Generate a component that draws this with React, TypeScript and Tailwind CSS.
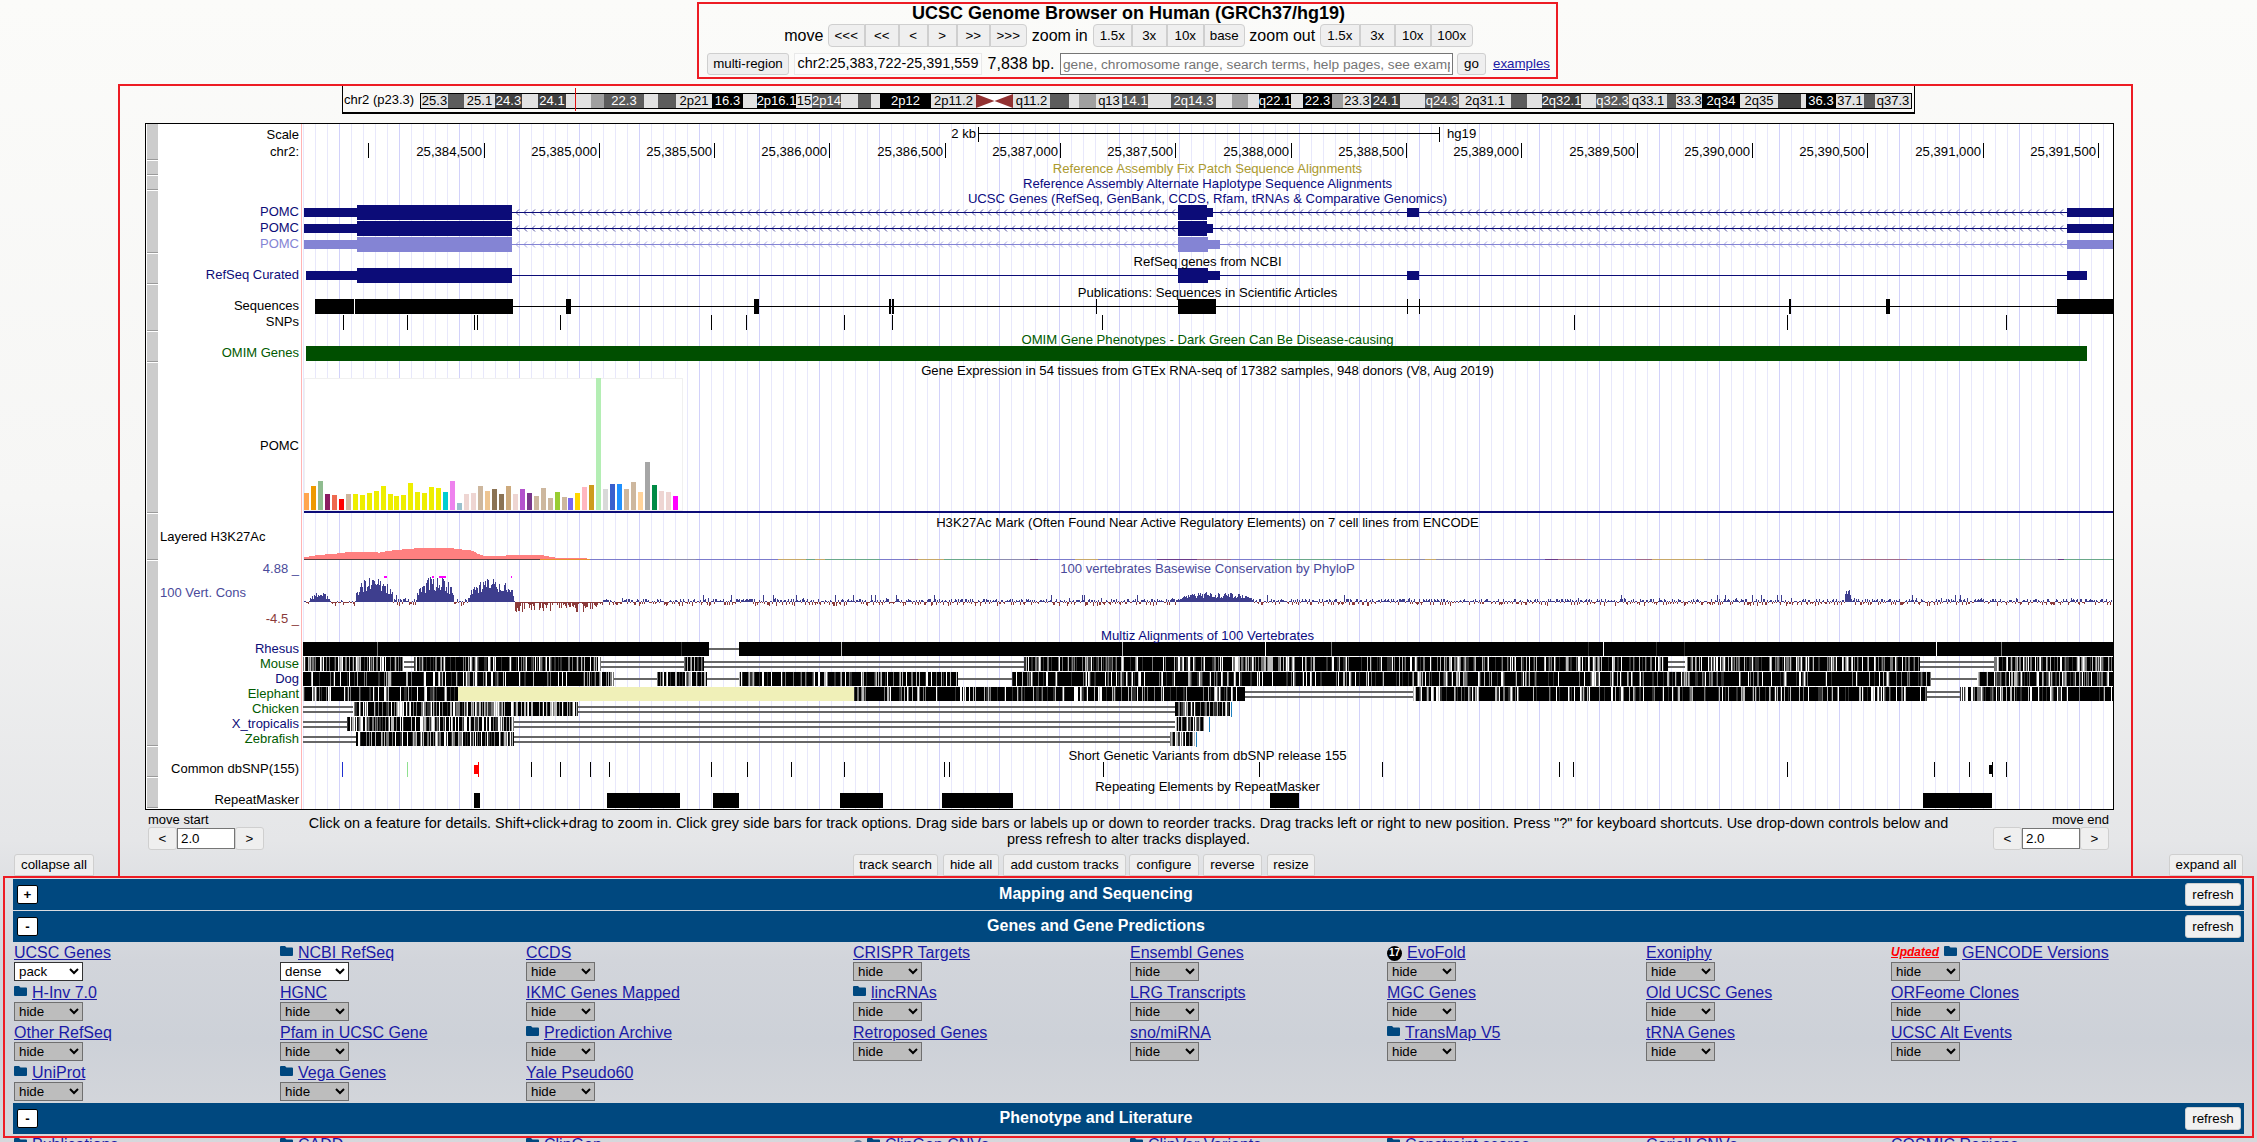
import React from 'react';

// --- seeded noise so the wiggle tracks come out the same on every load ---
function makeRand(seed: number) {
  let s = seed;
  return () => {
    s = (s * 1664525 + 1013904223) >>> 0;
    return s / 4294967296;
  };
}

const navy = '#0c0c78';
const green = '#005a00';
const blueBar = '#00487f';

// ideogram bands: [start px, end px, tone, label]
type Tone = 'l' | 'm' | 'd' | 'g' | 'k';
const toneClass: Record<Tone, string> = {
  l: 'bg-[#e2e2e2] text-black',
  m: 'bg-[#a0a0a0] text-black',
  g: 'bg-[#5c5c5c] text-white',
  d: 'bg-[#404040] text-white',
  k: 'bg-black text-white',
};
const bandsLeft: [number, number, Tone, string][] = [
  [421, 448, 'l', '25.3'], [448, 464, 'g', ''], [464, 495, 'l', '25.1'], [495, 522, 'd', '24.3'],
  [522, 538, 'l', ''], [538, 566, 'd', '24.1'], [566, 591, 'l', ''], [591, 604, 'm', ''],
  [604, 644, 'g', '22.3'], [644, 658, 'l', ''], [658, 676, 'g', ''], [676, 712, 'l', '2p21'],
  [712, 743, 'k', '16.3'], [743, 757, 'l', ''], [757, 796, 'k', '2p16.1'], [796, 812, 'l', '15'],
  [812, 841, 'g', '2p14'], [841, 858, 'l', ''], [858, 871, 'g', ''], [871, 880, 'l', ''],
  [880, 931, 'k', '2p12'], [931, 976, 'l', '2p11.2'],
];
const bandsRight: [number, number, Tone, string][] = [
  [1013, 1050, 'l', 'q11.2'], [1050, 1069, 'g', ''], [1069, 1079, 'l', ''], [1079, 1096, 'm', ''],
  [1096, 1122, 'l', 'q13'], [1122, 1148, 'g', '14.1'], [1148, 1171, 'l', ''], [1171, 1216, 'g', '2q14.3'],
  [1216, 1232, 'l', ''], [1232, 1248, 'm', ''], [1248, 1259, 'l', ''], [1259, 1291, 'k', 'q22.1'],
  [1291, 1303, 'l', ''], [1303, 1332, 'k', '22.3'], [1332, 1343, 'm', ''], [1343, 1371, 'l', '23.3'],
  [1371, 1400, 'd', '24.1'], [1400, 1425, 'l', ''], [1425, 1459, 'g', 'q24.3'], [1459, 1511, 'l', '2q31.1'],
  [1511, 1527, 'g', ''], [1527, 1542, 'l', ''], [1542, 1581, 'd', '2q32.1'], [1581, 1596, 'l', ''],
  [1596, 1629, 'g', 'q32.3'], [1629, 1667, 'l', 'q33.1'], [1667, 1676, 'g', ''], [1676, 1702, 'l', '33.3'],
  [1702, 1740, 'k', '2q34'], [1740, 1778, 'l', '2q35'], [1778, 1801, 'd', ''], [1801, 1806, 'l', ''],
  [1806, 1836, 'k', '36.3'], [1836, 1864, 'l', '37.1'], [1864, 1875, 'g', ''], [1875, 1911, 'l', 'q37.3'],
];

function Bands({ items }: { items: [number, number, Tone, string][] }) {
  return (
    <>
      {items.map(([a, b, tone, label]) => (
        <div
          key={a}
          style={{ width: b - a }}
          className={`${toneClass[tone]} flex items-center justify-center overflow-visible whitespace-nowrap text-[13px] leading-[14px]`}
        >
          {label}
        </div>
      ))}
    </>
  );
}

const btn = 'h-full border border-[#cfcfcf] bg-[#efefef] text-[13.33px] text-black flex items-center justify-center shrink-0';

function Header() {
  return (
    <header className="h-[85px] pt-[2px] flex flex-col items-center">
      <h1 className="h-[22px] text-[18px] leading-[22px] font-bold text-black">UCSC Genome Browser on Human (GRCh37/hg19)</h1>
      <div className="flex h-[23px] items-center text-[16px]">
        <span className="w-[43.5px]">move</span>
        <button className={`${btn} w-[37px] rounded-l-[4px]`}>&lt;&lt;&lt;</button>
        <button className={`${btn} w-[34px]`}>&lt;&lt;</button>
        <button className={`${btn} w-[29px]`}>&lt;</button>
        <button className={`${btn} w-[29px]`}>&gt;</button>
        <button className={`${btn} w-[33px]`}>&gt;&gt;</button>
        <button className={`${btn} w-[37px] rounded-r-[4px]`}>&gt;&gt;&gt;</button>
        <span className="w-[66px] text-center">zoom in</span>
        <button className={`${btn} w-[39px] rounded-l-[4px]`}>1.5x</button>
        <button className={`${btn} w-[35px]`}>3x</button>
        <button className={`${btn} w-[37px]`}>10x</button>
        <button className={`${btn} w-[41px] rounded-r-[4px]`}>base</button>
        <span className="w-[75px] text-center">zoom out</span>
        <button className={`${btn} w-[40px] rounded-l-[4px]`}>1.5x</button>
        <button className={`${btn} w-[35px]`}>3x</button>
        <button className={`${btn} w-[36px]`}>10x</button>
        <button className={`${btn} w-[42px] rounded-r-[4px]`}>100x</button>
      </div>
      <div className="mt-[6px] flex h-[22px] items-center">
        <button className={`${btn} w-[82px] rounded-[3px]`}>multi-region</button>
        <span className="ml-[5px] flex h-full w-[188px] items-center justify-center border border-[#e9e9e9] bg-[#fcfcfc] text-[14.4px]">chr2:25,383,722-25,391,559</span>
        <span className="w-[78px] text-center text-[16px]">7,838 bp.</span>
        <input
          readOnly
          placeholder="gene, chromosome range, search terms, help pages, see examples"
          className="h-full w-[393px] border border-[#767676] bg-white px-[2px] text-[13.7px] placeholder:text-[#757575]"
        />
        <button className={`${btn} ml-[4px] w-[29px] rounded-[3px]`}>go</button>
        <a className="ml-[7px] text-[13.33px] text-[#1a1aa6] underline">examples</a>
      </div>
    </header>
  );
}

function Ideogram() {
  return (
    <div className="mx-auto flex h-[29px] w-[1573px] border border-b-2 border-black pt-[7px] pl-[1px]">
      <span className="w-[76px] text-[13px] leading-[14px]">chr2 (p23.3)</span>
      <div className="relative flex h-[16px] border border-black">
        <Bands items={bandsLeft} />
        <svg width="37" height="14" viewBox="0 0 37 14" className="shrink-0 bg-white">
          <path d="M0 0 L18.5 7 L37 0 V14 L18.5 7 L0 14 Z" fill="#933232" />
        </svg>
        <Bands items={bandsRight} />
        <div className="absolute left-[154px] top-[-6px] h-[23px] w-[1px] bg-[#e01010]" />
      </div>
    </div>
  );
}

// --- left label column ---
type Label = { text: string; color?: string; mt?: string; h?: string; left?: boolean };
const groups: { h: string; labels: Label[] }[] = [
  { h: 'h-[37px]', labels: [{ text: 'Scale', mt: 'mt-[3px]' }, { text: 'chr2:', mt: 'mt-[1px]' }] },
  { h: 'h-[15px]', labels: [] },
  { h: 'h-[15px]', labels: [] },
  {
    h: 'h-[63px]',
    labels: [
      { text: 'POMC', color: navy, mt: 'mt-[13px]' },
      { text: 'POMC', color: navy },
      { text: 'POMC', color: '#8484d4' },
    ],
  },
  { h: 'h-[31px]', labels: [{ text: 'RefSeq Curated', color: navy, mt: 'mt-[13px]' }] },
  { h: 'h-[47px]', labels: [{ text: 'Sequences', mt: 'mt-[13px]' }, { text: 'SNPs' }] },
  { h: 'h-[31px]', labels: [{ text: 'OMIM Genes', color: green, mt: 'mt-[13px]' }] },
  { h: 'h-[152px]', labels: [{ text: 'POMC', mt: 'mt-[75px]' }] },
  { h: 'h-[47px]', labels: [{ text: 'Layered H3K27Ac', mt: 'mt-[15px]', left: true }] },
  {
    h: 'h-[186px]',
    labels: [
      { text: '4.88 _', color: '#4a4a9a' },
      { text: '100 Vert. Cons', color: '#4a4a9a', mt: 'mt-[8px]', left: true },
      { text: '-4.5 _', color: '#8a3a3a', mt: 'mt-[10px]' },
      { text: 'Rhesus', color: navy, mt: 'mt-[14px]', h: 'h-[15px]' },
      { text: 'Mouse', color: green, h: 'h-[15px]' },
      { text: 'Dog', color: navy, h: 'h-[15px]' },
      { text: 'Elephant', color: green, h: 'h-[15px]' },
      { text: 'Chicken', color: green, h: 'h-[15px]' },
      { text: 'X_tropicalis', color: navy, h: 'h-[15px]' },
      { text: 'Zebrafish', color: green, h: 'h-[15px]' },
    ],
  },
  { h: 'h-[31px]', labels: [{ text: 'Common dbSNP(155)', mt: 'mt-[14px]' }] },
  { h: 'h-[31px]', labels: [{ text: 'RepeatMasker', mt: 'mt-[14px]' }] },
];

function LabelColumn() {
  return (
    <div className="flex w-[156px] shrink-0 flex-col border-r border-[#ffb4b4] bg-white">
      {groups.map((g, i) => (
        <div key={i} className={`${g.h} flex pl-[1px]`}>
          <div className="mb-[1px] w-[11px] shrink-0 border-b border-[#9a9a9a] bg-[#cccccc]" />
          <div className="flex-1 pr-[2px]">
            {g.labels.map((l, j) => (
              <div
                key={j}
                style={{ color: l.color ?? '#000' }}
                className={`${l.mt ?? ''} ${l.h ?? 'h-[16px]'} ${l.left ? 'pl-[2px] text-left' : 'text-right'} whitespace-nowrap text-[13px] leading-[15px]`}
              >
                {l.text}
              </div>
            ))}
          </div>
        </div>
      ))}
    </div>
  );
}

// --- canvas data, all in page coordinates (viewBox starts at 302,124) ---
const guideXs = Array.from({ length: 152 }, (_, i) => i);

function chevrons(y: number, x0: number, x1: number, skip: [number, number][]) {
  let d = '';
  for (let x = x0; x < x1; x += 8) {
    if (skip.some(([a, b]) => x > a - 4 && x < b + 4)) continue;
    d += `M${x + 3} ${y - 3}L${x} ${y}L${x + 3} ${y + 3}`;
  }
  return d;
}

const gtex: [number, string][] = [
  [400, '#ffa54f'], [378, '#ee9a00'], [363, '#8fbc8f'], [402, '#8b1c62'], [405, '#ee6a50'], [417, '#ff0000'], [402, '#cdb79e'],
  [402, '#eeee00'], [405, '#eeee00'], [399, '#eeee00'], [393, '#eeee00'], [378, '#eeee00'], [402, '#eeee00'], [408, '#eeee00'],
  [405, '#eeee00'], [369, '#eeee00'], [396, '#eeee00'], [399, '#eeee00'], [381, '#eeee00'], [384, '#eeee00'], [396, '#00ced1'],
  [363, '#ee82ee'], [429, '#9ac0cd'], [402, '#eed5d2'], [399, '#eed5d2'], [378, '#cdb79e'], [393, '#eec591'], [387, '#8b7355'],
  [402, '#8b7355'], [378, '#cdaa7d'], [402, '#eed5d2'], [387, '#b452cd'], [399, '#7a378b'], [408, '#cdb79e'], [384, '#cdb79e'],
  [414, '#cdb79e'], [396, '#9acd32'], [411, '#cdb79e'], [414, '#7a67ee'], [399, '#ffd700'], [381, '#ffb6c1'], [375, '#cd9b1d'],
  [54, '#b4eeb4'], [387, '#d9d9d9'], [372, '#3a5fcd'], [372, '#1e90ff'], [387, '#cdb79e'], [366, '#cdb79e'], [396, '#ffd39b'],
  [306, '#a6a6a6'], [375, '#008b45'], [393, '#eed5d2'], [396, '#eed5d2'], [408, '#ff00ff'],
];

const h3k27 = [
  [455, 592], [490, 585], [530, 582], [580, 575], [640, 575], [650, 578], [680, 572], [715, 568], [760, 564], [835, 564],
  [865, 568], [895, 572], [910, 582], [925, 588], [980, 588], [985, 585], [1075, 585], [1105, 592], [1140, 595], [1195, 595], [1195, 598], [455, 598],
]
  .map(([px, py]) => `${(130 + px / 2.613).toFixed(1)},${360 + py / 3}`)
  .join(' ');

const consBumps: [number, number, number][] = [
  [310, 329, 10], [356, 392, 25], [417, 453, 26], [469, 513, 25], [1178, 1252, 10], [1845, 1850, 16],
];
const cons = (() => {
  const r = makeRand(77);
  let up = '';
  let down = '';
  for (let x = 304; x < 2112; x++) {
    const v = r();
    let h = 0;
    const bump = consBumps.find(([a, b]) => x >= a && x <= b);
    if (bump) {
      const env = Math.pow(Math.sin((Math.PI * (x - bump[0] + 1)) / (bump[1] - bump[0] + 2)), 0.35);
      h = bump[2] * env * (0.4 + 0.6 * v);
    } else if (x > 514 && x < 600) {
      h = -v * v * 10;
    } else if (x < 356) {
      h = v < 0.5 ? v * 4 : -(v - 0.5) * 8;
    } else {
      h = v < 0.6 ? v * 6 : -(v - 0.6) * 10;
      if (v > 0.985) h = 7;
    }
    const a = Math.max(Math.round(Math.abs(h)), 1);
    if (h >= 0) up += `M${x} ${602 - a}h1v${a}h-1z`;
    else down += `M${x} 602h1v${a}h-1z`;
  }
  return { up, down };
})();

// alignment barcode rows
const levels = ['#000000', '#333333', '#777777', '#bbbbbb', '#ffffff'];
type Mix = number[];
const solid: Mix = [0.965, 0.012, 0.006, 0.005, 0.012];
const busy: Mix = [0.4, 0.2, 0.16, 0.12, 0.12];
const dark: Mix = [0.52, 0.18, 0.11, 0.09, 0.1];
const thin: Mix = [0.36, 0.16, 0.16, 0.14, 0.18];

const multiz: { y: number; lines: number[]; gaps: [number, number][]; blocks: [number, number, Mix, number][] }[] = [
  { y: 642, lines: [648.5], gaps: [[709, 739]], blocks: [[303, 709, solid, 14], [739, 2113, solid, 24]] },
  {
    y: 657, lines: [661.5, 666.5], gaps: [[404, 414], [601, 684], [704, 1024], [1668, 1685], [1920, 1994]],
    blocks: [[303, 404, busy, 2], [414, 601, busy, 2], [684, 704, dark, 2], [1024, 1668, busy, 2], [1685, 1920, busy, 2], [1994, 2008, thin, 2], [2008, 2113, busy, 2]],
  },
  {
    y: 672, lines: [678.5], gaps: [[614, 657], [707, 739], [958, 1012], [1931, 1977]],
    blocks: [[303, 601, dark, 3], [601, 614, thin, 2], [657, 707, busy, 2], [739, 958, dark, 3], [1012, 1925, dark, 3], [1925, 1931, thin, 1], [1977, 1997, dark, 3], [1997, 2113, busy, 2]],
  },
  {
    y: 687, lines: [691.5, 696.5], gaps: [[1245, 1413], [1927, 1960]],
    blocks: [[303, 458, dark, 3], [854, 1245, dark, 3], [1413, 1927, dark, 3], [1960, 2002, thin, 2], [2002, 2113, dark, 3]],
  },
  { y: 702, lines: [706.5, 711.5], gaps: [[303, 353], [578, 1175]], blocks: [[353, 578, thin, 2], [1175, 1230, thin, 2]] },
  { y: 717, lines: [721.5, 726.5], gaps: [[303, 347], [514, 1175]], blocks: [[347, 514, thin, 2], [1175, 1207, thin, 2]] },
  { y: 732, lines: [736.5, 741.5], gaps: [[303, 356], [514, 1170]], blocks: [[356, 514, thin, 2], [1170, 1195, thin, 2]] },
];

const barcode = (() => {
  const r = makeRand(4242);
  const paths = levels.map(() => '');
  multiz.forEach((row) => {
    row.blocks.forEach(([a, b, mix, run]) => {
      let x = a;
      while (x < b) {
        let v = r();
        let lvl = 0;
        for (let i = 0; i < mix.length; i++) {
          if (v < mix[i]) {
            lvl = i;
            break;
          }
          v -= mix[i];
        }
        const len = lvl === 0 ? Math.min(b - x, 1 + Math.floor(r() * run)) : 1;
        paths[lvl] += `M${x} ${row.y}h${len}v14h-${len}z`;
        x += len;
      }
    });
  });
  return paths;
})();

const baselineColors = ['#7b7bcc', '#a06a8a', '#8c8cb0', '#c8a868', '#6aa88a', '#6a3a8a', '#7b7bcc'];
const baselineSegs = (() => {
  const r = makeRand(9);
  const segs: [number, number, string][] = [];
  let x = 590;
  while (x < 2113) {
    const len = 6 + Math.floor(r() * 55);
    segs.push([x, Math.min(2113, x + len), baselineColors[Math.floor(r() * baselineColors.length)]]);
    x += len;
  }
  return segs;
})();

const seqBlocks = [[315, 354], [355, 513], [566, 571], [754, 759], [889, 891], [892, 894], [1178, 1216], [1789, 1791], [1886, 1890], [2057, 2113]];
const seqThin = [1096, 1407, 1419];
const snpXs = [343, 407, 474, 477, 560, 711, 746, 844, 892, 1102, 1574, 1787, 2006];
const dbsnpBlack = [531, 560, 590, 609, 711, 747, 791, 844, 944, 949, 1103, 1259, 1382, 1559, 1573, 1787, 1934, 1969, 2006];
const rmsk = [[474, 480], [607, 680], [713, 739], [840, 883], [942, 1013], [1270, 1299], [1923, 1992]];
const scaleLabels = ['25,384,500', '25,385,000', '25,385,500', '25,386,000', '25,386,500', '25,387,000', '25,387,500', '25,388,000', '25,388,500', '25,389,000', '25,389,500', '25,390,000', '25,390,500', '25,391,000', '25,391,500'];

function T({ x, y, fill = '#000', anchor = 'middle', children }: { x: number; y: number; fill?: string; anchor?: 'middle' | 'end' | 'start'; children: React.ReactNode }) {
  return (
    <text x={x} y={y} fill={fill} textAnchor={anchor} dominantBaseline="central" fontSize={13.13} className="font-['Liberation_Sans',sans-serif]">
      {children}
    </text>
  );
}

function TrackCanvas() {
  const mid = 1207.5;
  return (
    <svg width="1811" height="685" viewBox="302 124 1811 685" className="block shrink-0 bg-white">
      <g shapeRendering="crispEdges">
        {guideXs.map((i) => (
          <line key={i} x1={303.5 + i * 12} x2={303.5 + i * 12} y1={124} y2={809} stroke={i % 5 === 3 ? '#d2d2fa' : '#e8e8fb'} />
        ))}

        {/* scale */}
        <line x1={978} x2={1439} y1={133.5} y2={133.5} stroke="#000" />
        <line x1={978.5} x2={978.5} y1={127} y2={142} stroke="#000" />
        <line x1={1439.5} x2={1439.5} y1={127} y2={142} stroke="#000" />
        <line x1={368.5} x2={368.5} y1={143} y2={158} stroke="#000" />
        {scaleLabels.map((_, i) => {
          const x = Math.round(483.5 + i * 115.33) + 0.5;
          return <line key={i} x1={x} x2={x} y1={143} y2={158} stroke="#000" />;
        })}

        {/* UCSC genes */}
        {[212.5, 228.5].map((y, i) => (
          <g key={y} fill={navy}>
            <rect x={304} y={y - 4.5} width={53} height={9} />
            <rect x={357} y={y - 7.5} width={155} height={15} />
            <rect x={1178} y={y - 7.5} width={29} height={15} />
            <rect x={1207} y={y - 4.5} width={6} height={9} />
            {i === 0 && <rect x={1407} y={y - 4.5} width={12} height={9} />}
            <rect x={2067} y={y - 4.5} width={46} height={9} />
            <line x1={512} x2={2067} y1={y} y2={y} stroke={navy} />
          </g>
        ))}
        <g fill="#8484d4">
          <rect x={304} y={240} width={53} height={9} />
          <rect x={357} y={237} width={155} height={15} />
          <rect x={1178} y={237} width={30} height={15} />
          <rect x={1208} y={240} width={12} height={9} />
          <rect x={2067} y={240} width={46} height={9} />
          <line x1={512} x2={2067} y1={244.5} y2={244.5} stroke="#8484d4" />
        </g>

        {/* RefSeq */}
        <g fill={navy}>
          <rect x={306} y={271} width={51} height={9} />
          <rect x={357} y={268} width={155} height={15} />
          <rect x={1178} y={268} width={30} height={15} />
          <rect x={1208} y={271} width={12} height={9} />
          <rect x={1407} y={271} width={12} height={9} />
          <rect x={2067} y={271} width={20} height={9} />
          <rect x={512} y={275} width={1555} height={1} />
        </g>

        {/* publications + SNPs */}
        <rect x={513} y={306} width={1544} height={1} fill="#000" />
        {seqBlocks.map(([a, b]) => (
          <rect key={a} x={a} y={299} width={b - a} height={15} fill="#000" />
        ))}
        {seqThin.map((x) => (
          <rect key={x} x={x} y={299} width={1} height={15} fill="#000" />
        ))}
        {snpXs.map((x) => (
          <rect key={x} x={x} y={315} width={1} height={15} fill="#000" />
        ))}

        {/* OMIM */}
        <rect x={306} y={346} width={1781} height={15} fill="#004f00" />

        {/* GTEx */}
        <rect x={304.5} y={378.5} width={378} height={132} fill="#fff" stroke="#f0f0f0" />
        {gtex.map(([top, color], i) => (
          <rect key={i} x={304 + Math.round(i * 6.96)} y={360 + top / 3} width={5} height={(450 - top) / 3} fill={color} />
        ))}
        <rect x={304} y={511} width={1809} height={2} fill="#0c0c78" />

        {/* H3K27Ac */}
        <polygon points={h3k27} fill="#ff8080" />
        <rect x={304} y={559} width={236} height={1} fill="#5a4040" />
        <rect x={540} y={559} width={50} height={1} fill="#e89030" />
        {baselineSegs.map(([a, b, c]) => (
          <rect key={a} x={a} y={559} width={b - a} height={1} fill={c} />
        ))}

        {/* conservation */}
        <path d={cons.up} fill="#3e3e8e" />
        <path d={cons.down} fill="#8b3a3a" />
        <rect x={384} y={576} width={3} height={2} fill="#ff00ff" />
        <rect x={432} y={576} width={2} height={2} fill="#ff00ff" />
        <rect x={439} y={576} width={7} height={2} fill="#ff00ff" />
        <rect x={511} y={576} width={1} height={2} fill="#ff00ff" />

        {/* multiz */}
        {multiz.map((row) =>
          row.gaps.flatMap(([a, b]) =>
            row.lines.map((y) => <rect key={`${y}-${a}`} x={a} y={Math.floor(y)} width={b - a} height={1.5} fill="#666666" />),
          ),
        )}
        <rect x={458} y={687} width={396} height={14} fill="#f0f0b8" />
        {barcode.map((d, i) => (
          <path key={i} d={d} fill={levels[i]} />
        ))}
        <rect x={1231} y={702} width={1} height={15} fill="#2080c0" />
        <rect x={1209} y={717} width={1} height={15} fill="#2080c0" />
        <rect x={1196} y={732} width={1} height={15} fill="#2080c0" />

        {/* dbSNP */}
        <rect x={342} y={762} width={1} height={15} fill="#2030d0" />
        <rect x={407} y={762} width={1} height={15} fill="#90e090" />
        <rect x={474} y={765} width={5} height={9} fill="#ff0000" />
        <rect x={478} y={762} width={1} height={15} fill="#ff0000" />
        {dbsnpBlack.map((x) => (
          <rect key={x} x={x} y={762} width={1} height={15} fill="#000" />
        ))}
        <rect x={1989} y={765} width={4} height={9} fill="#000" />
        <rect x={1992} y={762} width={1} height={15} fill="#000" />

        {/* repeats */}
        {rmsk.map(([a, b]) => (
          <rect key={a} x={a} y={793} width={b - a} height={15} fill="#000" />
        ))}
      </g>

      <path d={chevrons(212.5, 516, 2064, [[1178, 1213], [1407, 1419]])} fill="none" stroke={navy} strokeWidth={0.7} />
      <path d={chevrons(228.5, 516, 2064, [[1178, 1213]])} fill="none" stroke={navy} strokeWidth={0.7} />
      <path d={chevrons(244.5, 516, 2064, [[1178, 1220]])} fill="none" stroke="#8484d4" strokeWidth={0.7} />

      <T x={976} y={133} anchor="end">2 kb</T>
      <T x={1447} y={133} anchor="start">hg19</T>
      {scaleLabels.map((l, i) => (
        <T key={l} x={Math.round(483.5 + i * 115.33) - 2} y={151} anchor="end">{l}</T>
      ))}
      <T x={mid} y={168} fill="#ab9a2e">Reference Assembly Fix Patch Sequence Alignments</T>
      <T x={mid} y={183} fill="#0a0a80">Reference Assembly Alternate Haplotype Sequence Alignments</T>
      <T x={mid} y={198} fill="#0a0a80">UCSC Genes (RefSeq, GenBank, CCDS, Rfam, tRNAs &amp; Comparative Genomics)</T>
      <T x={mid} y={261}>RefSeq genes from NCBI</T>
      <T x={mid} y={292}>Publications: Sequences in Scientific Articles</T>
      <T x={mid} y={339} fill="#005a00">OMIM Gene Phenotypes - Dark Green Can Be Disease-causing</T>
      <T x={mid} y={370}>Gene Expression in 54 tissues from GTEx RNA-seq of 17382 samples, 948 donors (V8, Aug 2019)</T>
      <T x={mid} y={522}>H3K27Ac Mark (Often Found Near Active Regulatory Elements) on 7 cell lines from ENCODE</T>
      <T x={mid} y={568} fill="#4a4a9a">100 vertebrates Basewise Conservation by PhyloP</T>
      <T x={mid} y={635} fill="#0a0a80">Multiz Alignments of 100 Vertebrates</T>
      <T x={mid} y={755}>Short Genetic Variants from dbSNP release 155</T>
      <T x={mid} y={786}>Repeating Elements by RepeatMasker</T>
    </svg>
  );
}

function StepControl({ label, right }: { label: string; right?: boolean }) {
  const arrow = 'flex h-[23px] w-[29px] items-center justify-center rounded-[3px] border border-[#cfcfcf] bg-[#efefef] text-[13.33px]';
  return (
    <div className={`flex w-[116px] shrink-0 flex-col ${right ? 'items-end' : 'items-start'}`}>
      <span className="mt-[2px] h-[15px] text-[13px] leading-[15px]">{label}</span>
      <div className="flex w-[116px] items-center">
        <button className={arrow}>&lt;</button>
        <input readOnly value="2.0" className="h-[21px] w-[58px] border border-[#767676] bg-white pl-[3px] text-[13.33px]" />
        <button className={arrow}>&gt;</button>
      </div>
    </div>
  );
}

function Folder() {
  return (
    <svg width="13" height="10" viewBox="0 0 13 10" className="mr-[5px] -mt-[4px] shrink-0">
      <path d="M0 1Q0 0 1 0H5L6.5 1.5H12Q13 1.5 13 2.5V9Q13 10 12 10H1Q0 10 0 9Z" fill={blueBar} />
    </svg>
  );
}

type Cell = { name: string; folder?: boolean; mode?: string; badge?: boolean; updated?: boolean; wrench?: boolean };

function TrackCell({ cell, noSelect }: { cell: Cell; noSelect?: boolean }) {
  const on = cell.mode && cell.mode !== 'hide';
  return (
    <div className="flex flex-col">
      <div className="flex h-[20px] items-center whitespace-nowrap text-[16px] leading-[20px]">
        {cell.updated && <span className="mr-[5px] -mt-[3px] text-[12px] font-bold italic text-[#ff0000] underline">Updated</span>}
        {cell.badge && (
          <span className="mr-[5px] flex h-[15px] w-[15px] items-center justify-center rounded-full bg-black text-[10px] font-bold text-white">17</span>
        )}
        {cell.wrench && <span className="mr-[4px] h-[10px] w-[10px] rounded-full border-2 border-[#5a7a9a]" />}
        {cell.folder && <Folder />}
        <a className="text-[#1a1aa6] underline">{cell.name}</a>
      </div>
      {!noSelect && (
        <select
          defaultValue={cell.mode ?? 'hide'}
          className={`-mt-[1px] h-[19px] w-[69px] rounded-none border text-[13.33px] text-black ${on ? 'border-[#333] bg-white' : 'border-[#6f6f6f] bg-[#bdbdbd]'}`}
        >
          <option value="hide">hide</option>
          <option value="dense">dense</option>
          <option value="squish">squish</option>
          <option value="pack">pack</option>
          <option value="full">full</option>
        </select>
      )}
    </div>
  );
}

const geneCells: Cell[] = [
  { name: 'UCSC Genes', mode: 'pack' }, { name: 'NCBI RefSeq', folder: true, mode: 'dense' }, { name: 'CCDS' }, { name: 'CRISPR Targets' },
  { name: 'Ensembl Genes' }, { name: 'EvoFold', badge: true }, { name: 'Exoniphy' }, { name: 'GENCODE Versions', folder: true, updated: true },
  { name: 'H-Inv 7.0', folder: true }, { name: 'HGNC' }, { name: 'IKMC Genes Mapped' }, { name: 'lincRNAs', folder: true },
  { name: 'LRG Transcripts' }, { name: 'MGC Genes' }, { name: 'Old UCSC Genes' }, { name: 'ORFeome Clones' },
  { name: 'Other RefSeq' }, { name: 'Pfam in UCSC Gene' }, { name: 'Prediction Archive', folder: true }, { name: 'Retroposed Genes' },
  { name: 'sno/miRNA' }, { name: 'TransMap V5', folder: true }, { name: 'tRNA Genes' }, { name: 'UCSC Alt Events' },
  { name: 'UniProt', folder: true }, { name: 'Vega Genes', folder: true }, { name: 'Yale Pseudo60' },
];
const phenoCells: Cell[] = [
  { name: 'Publications', folder: true }, { name: 'CADD', folder: true }, { name: 'ClinGen', folder: true },
  { name: 'ClinGen CNVs', folder: true, wrench: true }, { name: 'ClinVar Variants', folder: true },
  { name: 'Constraint scores', folder: true }, { name: 'Coriell CNVs' }, { name: 'COSMIC Regions' },
];

const gridCols = 'grid grid-cols-[266px_246px_327px_277px_257px_259px_245px_1fr] auto-rows-[40px]';

function SectionBar({ title, open }: { title: string; open?: boolean }) {
  return (
    <div className="flex h-[31px] items-center justify-between bg-[#00487f] pl-[4px] pr-[3px]">
      <button className="flex h-[19px] w-[21px] items-center justify-center rounded-[2px] border border-black bg-white text-[13.33px] font-bold leading-none text-black">
        {open ? '-' : '+'}
      </button>
      <span className="flex-1 pr-[31px] pb-[1px] text-center text-[16px] font-bold text-white">{title}</span>
      <button className="flex h-[23px] w-[56px] items-center justify-center rounded-[3px] border border-[#cfcfcf] bg-[#f1f1f1] text-[13.33px] text-black">refresh</button>
    </div>
  );
}

export default function App() {
  return (
    <div className="relative h-[1142px] w-[2257px] overflow-hidden bg-[linear-gradient(#fbfbf9_0px,#f6f6f5_500px,#e5e6e8_840px,#d2d5db_960px,#cdd1d8_1040px,#d6d8dc_1142px)] font-['Liberation_Sans',sans-serif] text-black">
      <Header />
      <Ideogram />

      <div className="ml-[145px] mt-[9px] flex h-[687px] w-[1969px] border border-black bg-white">
        <LabelColumn />
        <TrackCanvas />
      </div>

      <div className="ml-[148px] flex h-[44px] w-[1961px]">
        <StepControl label="move start" />
        <p className="flex-1 pt-[5px] text-center text-[14.4px] leading-[16px]">
          Click on a feature for details. Shift+click+drag to zoom in. Click grey side bars for track options. Drag side bars or labels up or down to reorder tracks. Drag tracks left or right to new position. Press "?" for keyboard shortcuts. Use drop-down controls below and
          <br />
          press refresh to alter tracks displayed.
        </p>
        <StepControl label="move end" right />
      </div>

      <div className="flex h-[22px] pl-[14px] pr-[14px]">
        <button className={`${btn} w-[80px] rounded-t-[3px]`}>collapse all</button>
        <div className="ml-[759px] flex h-full">
          <button className={`${btn} w-[85px] rounded-t-[3px]`}>track search</button>
          <button className={`${btn} ml-[5px] w-[56px] rounded-t-[3px]`}>hide all</button>
          <button className={`${btn} ml-[4px] w-[123px] rounded-t-[3px]`}>add custom tracks</button>
          <button className={`${btn} ml-[3px] w-[70px] rounded-t-[3px]`}>configure</button>
          <button className={`${btn} ml-[4px] w-[59px] rounded-t-[3px]`}>reverse</button>
          <button className={`${btn} ml-[5px] w-[48px] rounded-t-[3px]`}>resize</button>
        </div>
        <button className={`${btn} ml-auto w-[74px] rounded-t-[3px]`}>expand all</button>
      </div>

      <section className="ml-[13px] mt-[3px] w-[2231px]">
        <SectionBar title="Mapping and Sequencing" />
        <div className="mt-[1px]">
          <SectionBar title="Genes and Gene Predictions" open />
        </div>
        <div className={`${gridCols} mt-[1px] h-[160px] pl-[1px]`}>
          {geneCells.map((c) => (
            <TrackCell key={c.name} cell={c} />
          ))}
        </div>
        <SectionBar title="Phenotype and Literature" open />
        <div className={`${gridCols} mt-[1px] pl-[1px]`}>
          {phenoCells.map((c) => (
            <TrackCell key={c.name} cell={c} noSelect />
          ))}
        </div>
      </section>

      {/* red annotation frames over the page */}
      <div className="pointer-events-none absolute left-[697px] top-[2px] h-[77px] w-[861px] border-2 border-[#ed1c24]" />
      <div className="pointer-events-none absolute left-[118px] top-[84px] h-[794px] w-[2015px] border-2 border-[#ed1c24]" />
      <div className="pointer-events-none absolute left-[3px] top-[876px] h-[262px] w-[2251px] border-2 border-[#ed1c24]" />
    </div>
  );
}
